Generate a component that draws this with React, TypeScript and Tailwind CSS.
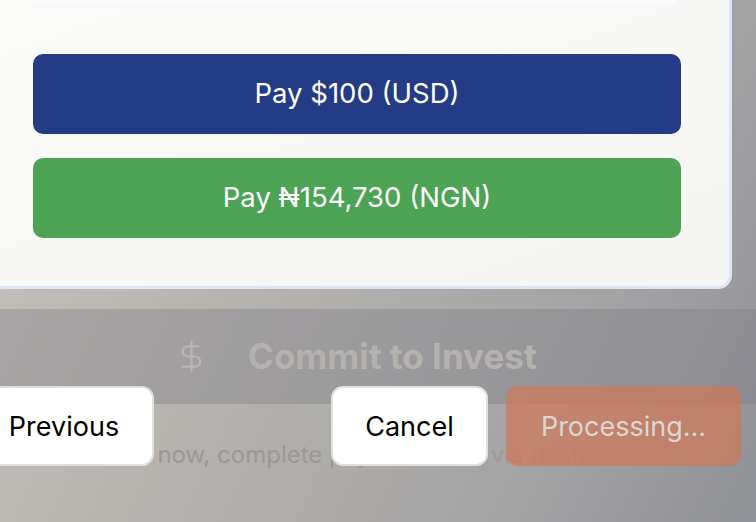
import React from "react";

function DollarIcon({ className }: { className?: string }) {
  return (
    <svg viewBox="0 0 24 24" fill="none" stroke="currentColor" strokeWidth={1.5} strokeLinecap="round" strokeLinejoin="round" className={className}>
      <line x1="12" x2="12" y1="2" y2="22" />
      <path d="M17 5H9.5a3.5 3.5 0 0 0 0 7h5a3.5 3.5 0 0 1 0 7H6" />
    </svg>
  );
}

export default function App() {
  return (
    <div
      className="w-[756px] h-[522px] overflow-hidden bg-[linear-gradient(115deg,#c6c2bd_0%,#bcb8b3_25%,#aeacaa_55%,#a3a3a4_75%,#909196_100%)]"
      style={{ fontFamily: "Inter, 'Noto Sans', sans-serif" }}
    >
      {/* Modal */}
      <div className="ml-[-18px] w-[750px] h-[289px] bg-[linear-gradient(160deg,#fafaf9,#f5f5f4)] border-[3px] border-t-0 border-[#dce6f8] rounded-b-[14px] px-[48px] pb-[48px] flex flex-col">
        <div className="h-[5px] w-[644px] bg-[#fbfcfd] rounded-b-[10px]" />
        <div className="mt-[49px] flex flex-col gap-[24px]">
          <button className="h-[80px] w-full rounded-[10px] bg-[#243b85] text-white text-[27.5px] leading-none">
            Pay $100 (USD)
          </button>
          <button className="h-[80px] w-full rounded-[10px] bg-[#4ca354] text-white text-[27.5px] leading-none">
            Pay ₦154,730 (NGN)
          </button>
        </div>
      </div>

      {/* Background page band */}
      <div className="mt-[20px] h-[95px] bg-[#7f8088]/40 flex items-center pl-[174px]">
        <DollarIcon className="w-[35px] h-[35px] text-[#b9b6b2]" />
        <span className="ml-[39px] text-[35px] font-bold text-[#b4b1ae] leading-none">Commit to Invest</span>
      </div>

      <div className="pt-[37px] pl-[63px] whitespace-nowrap text-[24px] leading-[28px] text-[#9c9996]">
        Commit now, complete payment later via dashboard
      </div>

      {/* Footer buttons */}
      <div className="relative mt-[-83px] flex items-center">
        <button className="ml-[-26px] w-[180px] h-[80px] rounded-[12px] bg-white border-2 border-[#e2e0de] text-black text-[27px] leading-none">
          Previous
        </button>
        <button className="ml-[177px] w-[157px] h-[80px] rounded-[12px] bg-white border-2 border-[#e2e0de] text-black text-[27px] leading-none">
          Cancel
        </button>
        <button className="ml-[18px] w-[235px] h-[80px] rounded-[12px] bg-[#d07757]/70 text-[#dcd6d2] text-[27px] leading-none">
          Processing...
        </button>
      </div>
    </div>
  );
}
